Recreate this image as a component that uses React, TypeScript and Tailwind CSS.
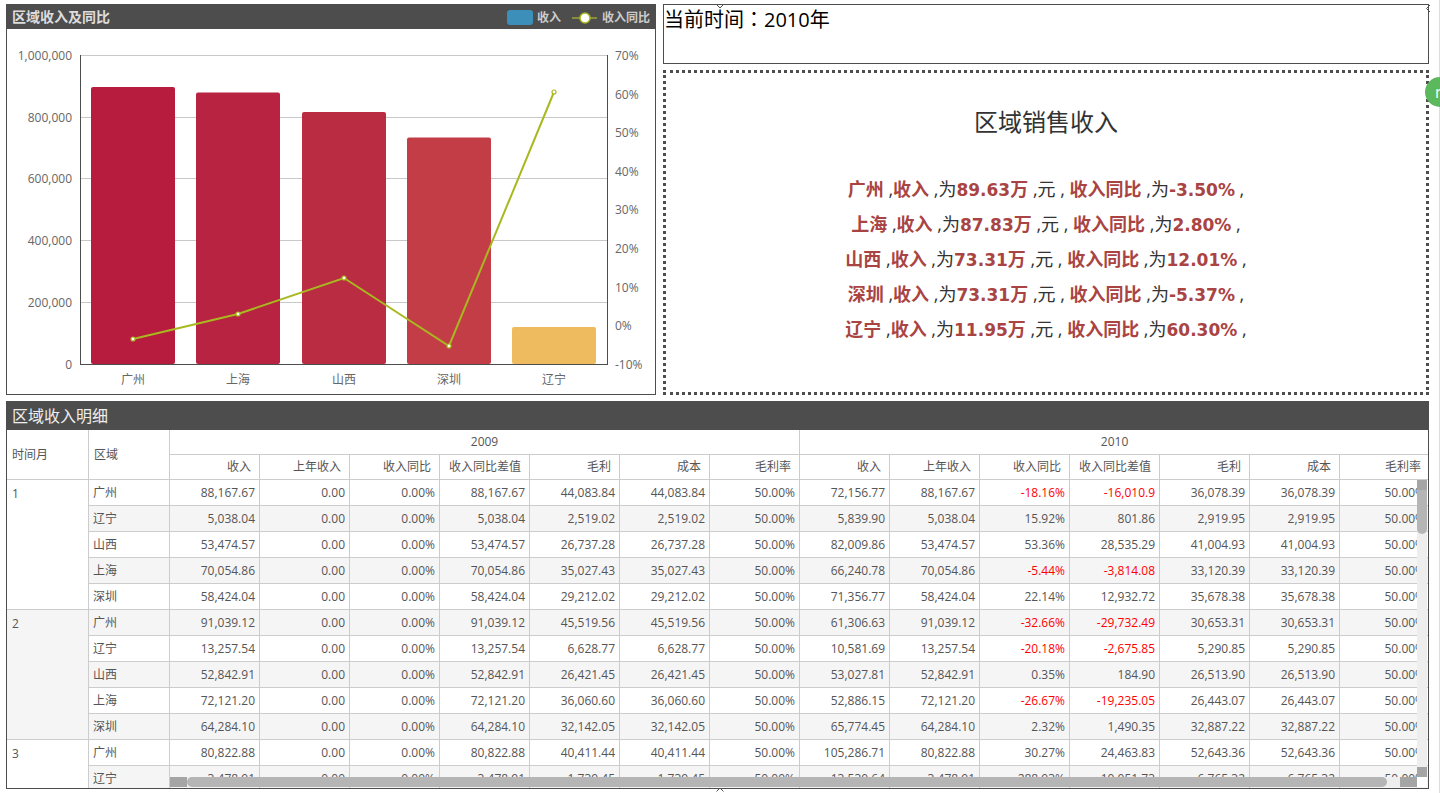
const bars = [
  { name: "广州", x: 91, top: 87, color: "#b71c3e", px: 133, py: 339 },
  { name: "上海", x: 196, top: 92.5, color: "#b72340", px: 238, py: 314 },
  { name: "山西", x: 302, top: 112, color: "#b92c42", px: 344, py: 278 },
  { name: "深圳", x: 407, top: 137.5, color: "#c33d47", px: 449, py: 346 },
  { name: "辽宁", x: 512, top: 327, color: "#eebb5e", px: 554, py: 92 },
];

const leftTicks = [
  { label: "1,000,000", y: 55.5 },
  { label: "800,000", y: 117.5 },
  { label: "600,000", y: 178.5 },
  { label: "400,000", y: 240.5 },
  { label: "200,000", y: 302.5 },
  { label: "0", y: 364.5 },
];

const rightTicks = ["70%", "60%", "50%", "40%", "30%", "20%", "10%", "0%", "-10%"];

const summary = [
  ["广州", "89.63", "-3.50%"],
  ["上海", "87.83", "2.80%"],
  ["山西", "73.31", "12.01%"],
  ["深圳", "73.31", "-5.37%"],
  ["辽宁", "11.95", "60.30%"],
];

const subHeaders = ["收入", "上年收入", "收入同比", "收入同比差值", "毛利", "成本", "毛利率"];

// region, 2009 income, 2009 profit, 2010 income, yoy, diff, 2010 profit
const rows = [
  ["1", "广州", "88,167.67", "44,083.84", "72,156.77", "-18.16%", "-16,010.9", "36,078.39"],
  ["", "辽宁", "5,038.04", "2,519.02", "5,839.90", "15.92%", "801.86", "2,919.95"],
  ["", "山西", "53,474.57", "26,737.28", "82,009.86", "53.36%", "28,535.29", "41,004.93"],
  ["", "上海", "70,054.86", "35,027.43", "66,240.78", "-5.44%", "-3,814.08", "33,120.39"],
  ["", "深圳", "58,424.04", "29,212.02", "71,356.77", "22.14%", "12,932.72", "35,678.38"],
  ["2", "广州", "91,039.12", "45,519.56", "61,306.63", "-32.66%", "-29,732.49", "30,653.31"],
  ["", "辽宁", "13,257.54", "6,628.77", "10,581.69", "-20.18%", "-2,675.85", "5,290.85"],
  ["", "山西", "52,842.91", "26,421.45", "53,027.81", "0.35%", "184.90", "26,513.90"],
  ["", "上海", "72,121.20", "36,060.60", "52,886.15", "-26.67%", "-19,235.05", "26,443.07"],
  ["", "深圳", "64,284.10", "32,142.05", "65,774.45", "2.32%", "1,490.35", "32,887.22"],
  ["3", "广州", "80,822.88", "40,411.44", "105,286.71", "30.27%", "24,463.83", "52,643.36"],
  ["", "辽宁", "3,478.91", "1,739.45", "13,530.64", "288.93%", "10,051.73", "6,765.32"],
];

function RevenueChart() {
  return (
    <svg width="648" height="365" viewBox="7 29 648 365" className="block">
      {leftTicks.slice(0, 5).map((t) => (
        <line key={t.y} x1="80" x2="607" y1={t.y} y2={t.y} stroke="#c8c8c8" />
      ))}
      {bars.map((b) => (
        <rect
          key={b.name}
          x={b.x}
          y={b.top}
          width="84"
          height={364 - b.top}
          rx="2"
          fill={b.color}
        />
      ))}
      <line x1="80.5" x2="80.5" y1="55" y2="365" stroke="#4d4d4d" />
      <line x1="607.5" x2="607.5" y1="55" y2="365" stroke="#4d4d4d" />
      <line x1="80" x2="608" y1="364.5" y2="364.5" stroke="#4d4d4d" />
      <polyline
        points={bars.map((b) => `${b.px},${b.py}`).join(" ")}
        fill="none"
        stroke="#a9b81f"
        strokeWidth="2"
      />
      {bars.map((b) => (
        <circle key={b.name} cx={b.px} cy={b.py} r="2" fill="#ffffff" stroke="#a9b81f" strokeWidth="1.2" />
      ))}
      {leftTicks.map((t) => (
        <text key={t.label} x="72" y={t.y} textAnchor="end" dominantBaseline="central" fontSize="12" fill="#666666">
          {t.label}
        </text>
      ))}
      {rightTicks.map((label, i) => (
        <text key={label} x="615" y={55.5 + i * 38.6} dominantBaseline="central" fontSize="12" fill="#666666">
          {label}
        </text>
      ))}
      {bars.map((b) => (
        <text key={b.name} x={b.px} y="379" textAnchor="middle" dominantBaseline="central" fontSize="12" fill="#666666">
          {b.name}
        </text>
      ))}
    </svg>
  );
}

function Handle({ className, rotate }: { className: string; rotate: string }) {
  return (
    <svg width="8" height="5" viewBox="0 0 8 5" className={`absolute ${className} ${rotate}`}>
      <path d="M0.5 0.5 L4 4 L7.5 0.5" fill="none" stroke="#4d4d4d" strokeWidth="1" />
    </svg>
  );
}

function NumCell({ children, red }: { children: string; red?: boolean }) {
  return (
    <td className={`border-r border-b border-[#cccccc] pr-1 text-right ${red ? "text-[#ff0000]" : ""}`}>{children}</td>
  );
}

function DetailTable() {
  return (
    <table className="w-[1423px] shrink-0 table-fixed border-separate border-spacing-0 text-[12px] text-[#555555]">
      <colgroup>
        <col className="w-[82px]" />
        <col className="w-[81px]" />
        {Array.from({ length: 14 }).map((_, i) => (
          <col key={i} className="w-[90px]" />
        ))}
      </colgroup>
      <thead>
        <tr className="h-[25px]">
          <th rowSpan={2} className="border-r border-b border-[#cccccc] pl-[5px] text-left font-normal">
            时间月
          </th>
          <th rowSpan={2} className="border-r border-b border-[#cccccc] pl-[5px] text-left font-normal">
            区域
          </th>
          <th colSpan={7} className="border-r border-b border-[#cccccc] text-center font-normal">
            2009
          </th>
          <th colSpan={7} className="border-r border-b border-[#cccccc] text-center font-normal">
            2010
          </th>
        </tr>
        <tr className="h-[25px]">
          {[...subHeaders, ...subHeaders].map((h, i) => (
            <th key={i} className="border-r border-b border-[#cccccc] pr-2 text-right font-normal">
              {h}
            </th>
          ))}
        </tr>
      </thead>
      <tbody>
        {rows.map((r, i) => {
          const negative = r[5].startsWith("-");
          return (
            <tr key={i} className={`h-[26px] ${i % 2 === 1 ? "bg-[#f5f5f5]" : "bg-white"}`}>
              {r[0] && (
                <td
                  rowSpan={5}
                  className={`border-r border-b border-[#cccccc] pt-[5px] pl-[5px] align-top ${
                    r[0] === "2" ? "bg-[#f5f5f5]" : "bg-white"
                  }`}
                >
                  {r[0]}
                </td>
              )}
              <td className="border-r border-b border-[#cccccc] pl-1">{r[1]}</td>
              <NumCell>{r[2]}</NumCell>
              <NumCell>0.00</NumCell>
              <NumCell>0.00%</NumCell>
              <NumCell>{r[2]}</NumCell>
              <NumCell>{r[3]}</NumCell>
              <NumCell>{r[3]}</NumCell>
              <NumCell>50.00%</NumCell>
              <NumCell>{r[4]}</NumCell>
              <NumCell>{r[2]}</NumCell>
              <NumCell red={negative}>{r[5]}</NumCell>
              <NumCell red={negative}>{r[6]}</NumCell>
              <NumCell>{r[7]}</NumCell>
              <NumCell>{r[7]}</NumCell>
              <NumCell>50.00%</NumCell>
            </tr>
          );
        })}
      </tbody>
    </table>
  );
}

export default function App() {
  return (
    <div className="relative h-[793px] w-[1440px] overflow-hidden bg-white pt-1 pl-[6px] font-['Open_Sans','Noto_Sans_CJK_SC',sans-serif]">
      <div className="flex h-[391px] gap-[7px]">
        <div className="h-full w-[650px] border border-[#4d4d4d]">
          <div className="flex h-6 items-center justify-between bg-[#4d4d4d] pr-[5px] pl-[5px] text-[12px] text-[#cccccc]">
            <span className="-mt-px text-[14px] font-bold text-[#dddddd]">区域收入及同比</span>
            <div className="mt-px flex items-center">
              <span className="h-[15px] w-[26px] rounded-[3px] bg-[#3b8fb8]" />
              <span className="ml-[4px] font-bold">收入</span>
              <svg width="26" height="14" viewBox="0 0 26 14" className="ml-[11px]">
                <line x1="0" x2="25" y1="7" y2="7" stroke="#9aa53a" strokeWidth="1.5" />
                <circle cx="13" cy="7" r="5" fill="#ffffff" stroke="#a9b81f" strokeWidth="1.5" />
              </svg>
              <span className="ml-[4px] font-bold">收入同比</span>
            </div>
          </div>
          <RevenueChart />
        </div>

        <div className="flex w-[766px] flex-col gap-[6px]">
          <div className="h-[60px] border border-[#4d4d4d] text-[20px] leading-[28px] text-black">
            当前时间<span className="font-['Noto_Sans_CJK_TC',sans-serif]">：</span>2010年
          </div>
          <div className="h-[325px] border-[3px] border-dotted border-[#4d4d4d] pt-[32px] text-center text-[18px] leading-[35px] text-[#333333]">
            <h2 className="text-[24px] leading-[34px] text-[#333333]">区域销售收入</h2>
            <div className="mt-[33px]">
              {summary.map((s) => (
                <p key={s[0]} className="h-[35px]">
                  <b className="text-[#a94442]">{s[0]}</b> ,<b className="text-[#a94442]">收入</b> ,为
                  <b className="text-[#a94442]">
                    <span className="font-['DejaVu_Sans',sans-serif] text-[17px]">{s[1]}</span>万
                  </b>{" "}
                  ,元 , <b className="text-[#a94442]">收入同比</b> ,为
                  <b className="font-['DejaVu_Sans',sans-serif] text-[17px] text-[#a94442]">{s[2]}</b> ,
                </p>
              ))}
            </div>
          </div>
        </div>
      </div>

      <div className="mt-[6px] flex h-[388px] w-[1423px] flex-col overflow-hidden border border-t-0 border-[#4d4d4d]">
        <div className="flex h-[29px] shrink-0 items-center bg-[#4d4d4d] pl-[5px] text-[16px] text-[#eeeeee]">
          区域收入明细
        </div>
        <DetailTable />
      </div>

      {/* table scrollbars */}
      <div className="absolute top-[480px] left-[1417px] flex h-[297px] w-[10px] flex-col bg-[#eeeeee]">
        <div className="h-[10px] bg-[#a5a5a5]" />
        <div className="h-[44px] rounded-b-[5px] bg-[#b5b5b5]" />
        <div className="flex-1" />
        <div className="h-[10px] bg-[#a5a5a5]" />
      </div>
      <div className="absolute top-[777px] left-[170px] flex h-[10px] w-[1247px] bg-[#eeeeee]">
        <div className="w-[17px] bg-[#a5a5a5]" />
        <div className="w-[1200px] rounded-r-[5px] rounded-l-[5px] bg-[#b5b5b5]" />
        <div className="flex-1" />
        <div className="w-[17px] bg-[#a5a5a5]" />
      </div>
      <div className="absolute top-[777px] left-[1417px] h-[10px] w-[10px] bg-white" />

      {/* resize handles */}
      <Handle className="top-[4px] left-[716px]" rotate="" />
      <Handle className="top-[787px] left-[716px]" rotate="rotate-180" />
      <Handle className="top-[6px] left-[1424px]" rotate="rotate-90" />

      <div className="absolute top-0 left-[1439px] h-full w-px bg-[#dddddd]" />
      <div className="absolute top-[77px] left-[1425px] flex h-[30px] w-[30px] items-center rounded-full bg-[#5cb85c] pl-[10px] text-[16px] text-white">
        n
      </div>
    </div>
  );
}
